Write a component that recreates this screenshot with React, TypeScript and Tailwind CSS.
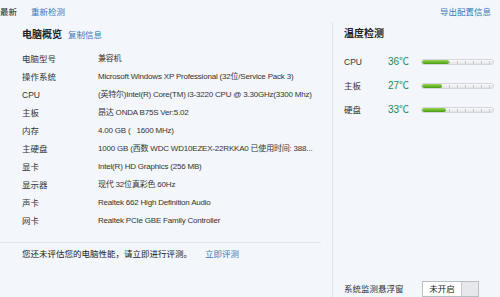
import React from "react";

const rows: [string, string][] = [
  ["电脑型号", "兼容机"],
  ["操作系统", "Microsoft Windows XP Professional (32位/Service Pack 3)"],
  ["CPU", "(英特尔)Intel(R) Core(TM) i3-3220 CPU @ 3.30GHz(3300 Mhz)"],
  ["主板", "昂达 ONDA B75S Ver:5.02"],
  ["内存", "4.00 GB (   1600 MHz)"],
  ["主硬盘", "1000 GB (西数 WDC WD10EZEX-22RKKA0 已使用时间: 388..."],
  ["显卡", "Intel(R) HD Graphics (256 MB)"],
  ["显示器", "现代 32位真彩色 60Hz"],
  ["声卡", "Realtek 662 High Definition Audio"],
  ["网卡", "Realtek PCIe GBE Family Controller"],
];

const temps: { label: string; value: string; fill: number }[] = [
  { label: "CPU", value: "36℃", fill: 27 },
  { label: "主板", value: "27℃", fill: 20 },
  { label: "硬盘", value: "33℃", fill: 24 },
];

function TempBar({ fill }: { fill: number }) {
  return (
    <div className="relative w-[73px] h-[6px] rounded-full border border-[#d3d6da] bg-gradient-to-b from-[#fafafa] to-[#e2e4e6] overflow-hidden">
      <div className="absolute inset-0 flex items-center justify-end pr-[3px] gap-[7px]">
        {Array.from({ length: 7 }).map((_, i) => (
          <span key={i} className="block w-px h-[3px] bg-[#c4c7cb]" />
        ))}
      </div>
      <div
        className="absolute left-0 top-0 bottom-0 rounded-full bg-gradient-to-b from-[#9ad65a] via-[#6cbb2c] to-[#4e9a1c]"
        style={{ width: fill }}
      />
    </div>
  );
}

export default function App() {
  return (
    <div
      className="w-[500px] h-[297px] bg-[#f3f6fa] overflow-hidden text-[#333] text-[8.5px] leading-none"
      style={{ fontFamily: '"Liberation Sans", "Noto Sans CJK SC", sans-serif' }}
    >
      {/* top bar */}
      <div className="h-[22px] pt-[2px] flex items-center">
        <span className="text-[#222]">最新</span>
        <span className="ml-[14px] text-[#3b78b8]">重新检测</span>
        <span className="ml-auto mr-[9px] text-[#3b78b8]">导出配置信息</span>
      </div>

      <div className="flex h-[275px]">
        {/* left */}
        <div className="w-[332px] flex flex-col">
          <div className="h-[26px] pl-[22px] flex items-center">
            <span className="font-bold text-[10px] text-[#222]">电脑概览</span>
            <span className="ml-[6px] text-[#3b78b8]">复制信息</span>
          </div>
          <div className="mt-[2px] pl-[22px] flex flex-col">
            {rows.map(([k, v]) => (
              <div key={k} className="h-[18px] flex items-center">
                <span className="w-[76px] text-[#333]">{k}</span>
                <span className="text-[#333] whitespace-pre text-[8px] tracking-[-0.2px]">{v}</span>
              </div>
            ))}
          </div>
          <div className="mt-[12px] w-[321px] h-px bg-[#e3e7ec]" />
          <div className="h-[22px] pl-[22px] flex items-center">
            <span className="text-[#222]">您还未评估您的电脑性能，请立即进行评测。</span>
            <span className="ml-[13px] text-[#3b78b8]">立即评测</span>
          </div>
        </div>

        {/* right */}
        <div className="flex-1 border-l border-[#dfe4ea] flex flex-col">
          <div className="h-[26px] pl-[11px] flex items-center">
            <span className="font-bold text-[10px] text-[#222]">温度检测</span>
          </div>
          <div className="mt-[5px] pl-[11px] flex flex-col">
            {temps.map((t) => (
              <div key={t.label} className="h-[24px] flex items-center">
                <span className="w-[44px]">{t.label}</span>
                <span className="w-[33px] text-[#1d8a4e] text-[10px]">{t.value}</span>
                <TempBar fill={t.fill} />
              </div>
            ))}
          </div>
          <div className="mt-[159px] pl-[11px] flex items-center h-[16px]">
            <span className="w-[78px] text-[#333]">系统监测悬浮窗</span>
            <div className="flex h-[16px] border border-[#b9bec4]">
              <div className="w-[38px] bg-white flex items-center justify-center text-[#222]">未开启</div>
              <div className="w-[17px] bg-[#e6e8eb] border-l border-[#c8ccd1]" />
            </div>
          </div>
        </div>
      </div>
    </div>
  );
}
